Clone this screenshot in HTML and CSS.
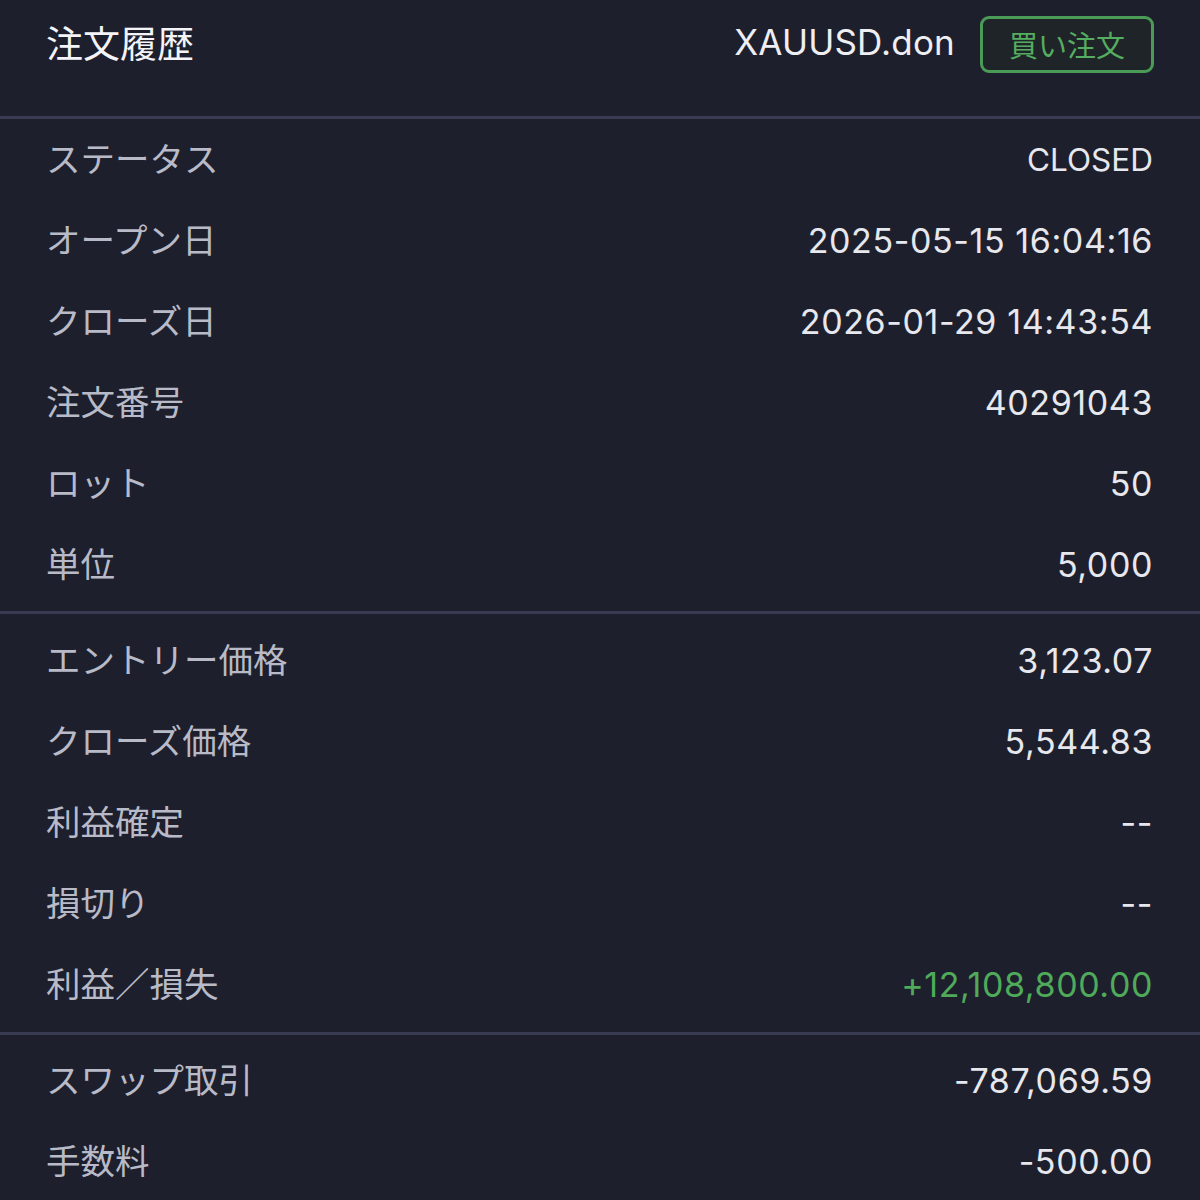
FILE: index.html
```html
<!DOCTYPE html>
<html lang="ja">
<head>
<meta charset="utf-8">
<title>注文履歴</title>
<link rel="stylesheet" href="styles.css">
</head>
<body>
<div class="screen">
  <header class="header">
    <h1 class="title">注文履歴</h1>
    <div class="symbol">XAUUSD.don</div>
    <div class="badge">買い注文</div>
  </header>
  <div class="divider"></div>
  <section class="section first">
    <div class="row"><span class="label">ステータス</span><span class="value word">CLOSED</span></div>
    <div class="row"><span class="label">オープン日</span><span class="value">2025-05-15 16:04:16</span></div>
    <div class="row"><span class="label">クローズ日</span><span class="value">2026-01-29 14:43:54</span></div>
    <div class="row"><span class="label">注文番号</span><span class="value">40291043</span></div>
    <div class="row"><span class="label">ロット</span><span class="value">50</span></div>
    <div class="row"><span class="label">単位</span><span class="value">5,000</span></div>
  </section>
  <div class="divider"></div>
  <section class="section">
    <div class="row"><span class="label">エントリー価格</span><span class="value">3,123.07</span></div>
    <div class="row"><span class="label">クローズ価格</span><span class="value">5,544.83</span></div>
    <div class="row"><span class="label">利益確定</span><span class="value">--</span></div>
    <div class="row"><span class="label">損切り</span><span class="value">--</span></div>
    <div class="row"><span class="label">利益／損失</span><span class="value profit">+12,108,800.00</span></div>
  </section>
  <div class="divider"></div>
  <section class="section last">
    <div class="row"><span class="label">スワップ取引</span><span class="value">-787,069.59</span></div>
    <div class="row"><span class="label">手数料</span><span class="value">-500.00</span></div>
  </section>
</div>
</body>
</html>
```

FILE: styles.css
```css
html, body {
  margin: 0;
  padding: 0;
  background: #1e1f2d;
}

.screen {
  width: 1200px;
  height: 1200px;
  overflow: hidden;
  background: #1e1f2d;
  font-family: "Inter", "Noto Sans CJK JP", sans-serif;
}

.header {
  height: 116px;
  display: flex;
  align-items: flex-start;
  padding: 16px 46px 0 46px;
  box-sizing: border-box;
}

.title {
  margin: 0;
  flex: 1;
  height: 56px;
  display: flex;
  align-items: center;
  font-family: "Noto Sans CJK JP", sans-serif;
  font-weight: 400;
  font-size: 37px;
  color: #f4f4f8;
  line-height: 1;
  padding-bottom: 3px;
  box-sizing: border-box;
}

.symbol {
  height: 56px;
  display: flex;
  align-items: center;
  font-family: "Inter", sans-serif;
  font-size: 35px;
  letter-spacing: 0.2px;
  color: #eeeef3;
  line-height: 1;
  padding-bottom: 4px;
  box-sizing: border-box;
}

.badge {
  margin-left: 25px;
  width: 174px;
  height: 57px;
  box-sizing: border-box;
  border: 3px solid #4a9b56;
  border-radius: 9px;
  background: #1f2429;
  color: #55ad60;
  font-family: "Noto Sans CJK JP", sans-serif;
  font-size: 29px;
  display: flex;
  align-items: center;
  justify-content: center;
  padding-bottom: 2px;
}

.divider {
  height: 3px;
  background: #383b52;
}

.section {
  padding: 6px 0 7px;
}

.section.first {
  padding: 0 0 6px;
}

.section.last {
  padding: 5px 0 0;
}

.row {
  height: 81px;
  display: flex;
  align-items: center;
  justify-content: space-between;
  padding: 0 48px 0 46px;
}

.label {
  font-family: "Noto Sans CJK JP", sans-serif;
  font-size: 34.5px;
  color: #b8bbc7;
  line-height: 1;
  margin-bottom: 4px;
}

.value {
  font-family: "Inter", "Noto Sans CJK JP", sans-serif;
  font-size: 34px;
  letter-spacing: 0.6px;
  color: #e7e8ee;
  line-height: 1;
  margin-right: -1px;
}

.value.word {
  font-size: 31.5px;
  letter-spacing: 0;
}

.value.profit {
  color: #4fab5a;
}
```
